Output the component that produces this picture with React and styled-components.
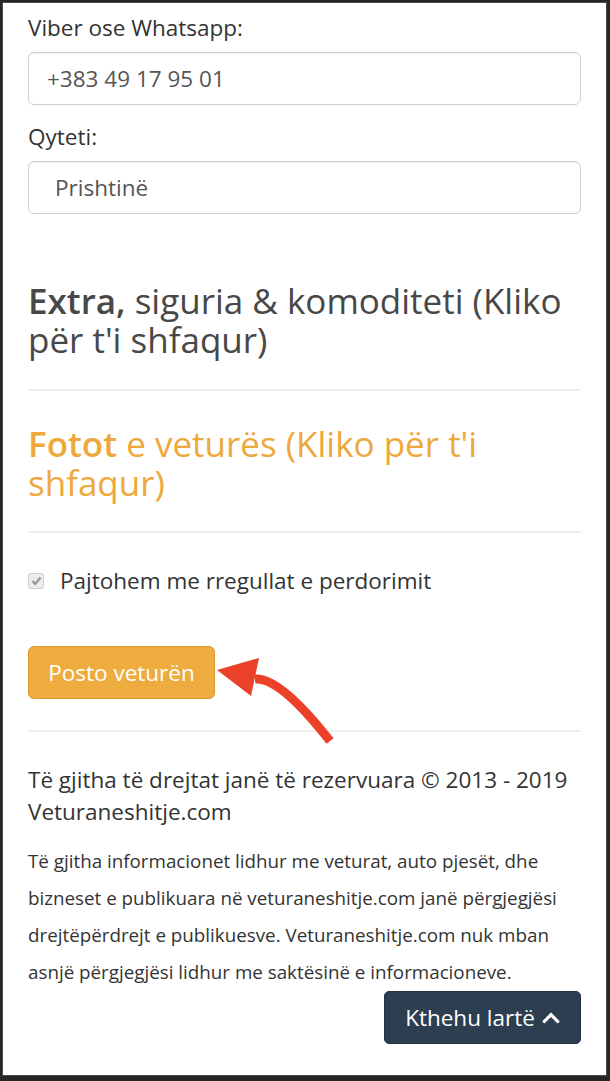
import React from "react";
import styled, { createGlobalStyle } from "styled-components";
import { FaChevronUp } from "react-icons/fa";

const Global = createGlobalStyle`
  html, body { margin: 0; padding: 0; background: #262626; }
  * { box-sizing: border-box; }
  body { font-family: "Open Sans", "Noto Sans", sans-serif; color: #333; }
`;

const Frame = styled.div`
  min-height: 1081px;
  display: flex;
  flex-direction: column;
  padding: 3px 4px 6px 3px;
  background: #262626;
`;

const Sheet = styled.main`
  flex: 1;
  background: #fff;
  box-shadow: 0 0 0 1px #4c4c4c;
  padding: 11px 25px 0 25px;
  display: flex;
  flex-direction: column;
`;

const Group = styled.div`
  display: flex;
  flex-direction: column;
  margin-bottom: ${(p) => p.$gap || 0}px;
`;

const Label = styled.label`
  font-size: 22.5px;
  line-height: 28px;
  color: #333;
  margin-bottom: 10px;
`;

const Field = styled.input`
  height: 53px;
  width: 100%;
  border: 1px solid #cfcfcf;
  border-radius: 6px;
  box-shadow: inset 0 1px 1px rgba(0, 0, 0, 0.06);
  padding: 0 0 0 ${(p) => p.$indent || 18}px;
  font-family: "Open Sans", "Noto Sans", sans-serif;
  font-size: 22.5px;
  color: #555;
  background: #fff;
  outline: none;
`;

const Heading = styled.h3`
  margin: 0;
  font-size: 35px;
  line-height: 38.5px;
  font-weight: 400;
  color: ${(p) => p.$color || "#484848"};
  cursor: pointer;
  strong { font-weight: 600; }
`;

const Rule = styled.hr`
  border: 0;
  border-top: 2px solid #eeeeee;
  margin: ${(p) => p.$top || 30}px 0 ${(p) => p.$bottom || 34}px;
`;

const CheckRow = styled.label`
  display: flex;
  align-items: center;
  gap: 16px;
  font-size: 22.5px;
  line-height: 28px;
  color: #333;
  margin-bottom: 51px;
`;

const CheckBox = styled.span`
  width: 16px;
  height: 16px;
  border-radius: 3px;
  border: 1px solid #cdcdcd;
  background: #ececec;
  display: flex;
  align-items: center;
  justify-content: center;
`;

const ButtonRow = styled.div`
  position: relative;
  display: flex;
`;

const PostButton = styled.button`
  height: 53px;
  width: 187px;
  padding: 0;
  border: 1px solid #d9992f;
  border-radius: 6px;
  background: #edac3d;
  color: #fff;
  font-family: "Open Sans", "Noto Sans", sans-serif;
  font-size: 22.5px;
  cursor: pointer;
`;

const Arrow = styled.svg`
  position: absolute;
  left: 0;
  top: 0;
  overflow: visible;
  pointer-events: none;
`;

const Footer = styled.footer`
  display: flex;
  flex-direction: column;
`;

const Copy = styled.p`
  margin: 0 0 15px;
  font-size: 22.5px;
  line-height: 32px;
  color: #333;
`;

const Disclaimer = styled.p`
  margin: 0;
  font-size: 18.8px;
  line-height: 37px;
  color: #333;
`;

const TopButton = styled.button`
  align-self: flex-end;
  height: 53px;
  width: 197px;
  padding: 0 0 0 1px;
  display: flex;
  align-items: center;
  justify-content: center;
  gap: 6px;
  border: 1px solid #24323f;
  border-radius: 5px;
  background: #2c3e50;
  color: #fff;
  font-family: "Open Sans", "Noto Sans", sans-serif;
  font-size: 22.5px;
  cursor: pointer;
`;

export default function App() {
  return (
    <>
      <Global />
      <Frame>
        <Sheet>
          <Group $gap={18}>
            <Label>Viber ose Whatsapp:</Label>
            <Field readOnly value="+383 49 17 95 01" />
          </Group>
          <Group $gap={68}>
            <Label>Qyteti:</Label>
            <Field readOnly value="Prishtinë" $indent={26} />
          </Group>

          <Heading>
            <strong>Extra,</strong> siguria &amp; komoditeti (Kliko për t'i shfaqur)
          </Heading>
          <Rule $top={30} $bottom={34} />
          <Heading $color="#eea83b">
            <strong>Fotot</strong> e veturës (Kliko për t'i shfaqur)
          </Heading>
          <Rule $top={29} $bottom={34} />

          <CheckRow>
            <CheckBox>
              <svg width="11" height="10" viewBox="0 0 11 10">
                <path d="M1.5 5.2 L4.2 8 L9.6 1.6" fill="none" stroke="#9a9a9a" strokeWidth="2.4" strokeLinejoin="round" />
              </svg>
            </CheckBox>
            Pajtohem me rregullat e perdorimit
          </CheckRow>

          <ButtonRow>
            <PostButton>Posto veturën</PostButton>
            <Arrow width="320" height="100" viewBox="0 0 320 100">
              <path d="M227 33 Q252 31 302 95" fill="none" stroke="#ea4128" strokeWidth="9" />
              <polygon points="189,24 231,12 223,50" fill="#ea4128" />
            </Arrow>
          </ButtonRow>
          <Rule $top={31} $bottom={32} />

          <Footer>
            <Copy>Të gjitha të drejtat janë të rezervuara © 2013 - 2019 Veturaneshitje.com</Copy>
            <Disclaimer>
              Të gjitha informacionet lidhur me veturat, auto pjesët, dhe bizneset e publikuara në veturaneshitje.com janë përgjegjësi drejtëpërdrejt e publikuesve. Veturaneshitje.com nuk mban asnjë përgjegjësi lidhur me saktësinë e informacioneve.
            </Disclaimer>
            <TopButton>
              Kthehu lartë <FaChevronUp size={20} />
            </TopButton>
          </Footer>
        </Sheet>
      </Frame>
    </>
  );
}
